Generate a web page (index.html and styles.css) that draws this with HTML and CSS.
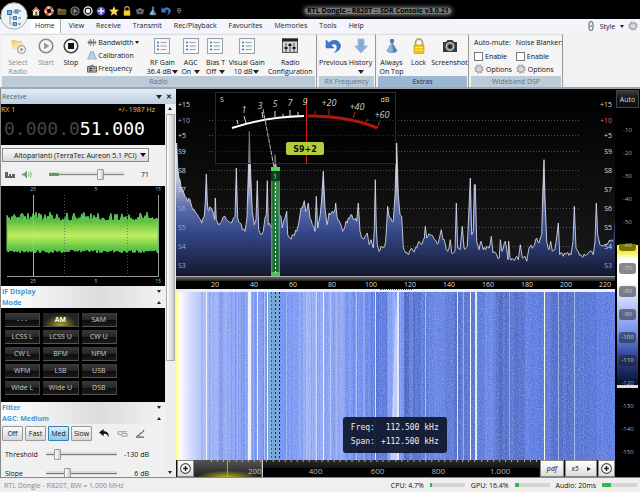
FILE: index.html
```html
<!DOCTYPE html>
<html lang="en">
<head>
<meta charset="utf-8">
<title>SDR Console</title>
<link rel="stylesheet" href="styles.css">
</head>
<body>
<svg class="defs" aria-hidden="true">
  <symbol id="list" viewBox="0 0 16 16"><rect x=".5" y=".5" width="15" height="15" fill="#f4f6f8" stroke="#9a9fa6"/><path d="M3 4.500h2M3 8h2M3 11.500h2" stroke="#4877a8" stroke-width="1.500"/><path d="M6.500 4.500h6M6.500 8h6M6.500 11.500h6" stroke="#97a3b0"/></symbol>
  <symbol id="gear" viewBox="0 0 16 16"><circle cx="8" cy="8" r="5" fill="#e6e6e6" stroke="#a2a4a8" stroke-width="2"/><circle cx="8" cy="8" r="6.500" fill="none" stroke="#a2a4a8" stroke-width="2" stroke-dasharray="2.600 2.500"/><circle cx="8" cy="8" r="2" fill="#fff" stroke="#aaa"/></symbol>
  <symbol id="undo" viewBox="0 0 16 16"><path d="M1 2v8h8L6.300 7.200C9 5 12 6 12 9.500c0 2-1 3.500-2.500 5C13 13.500 15.500 11 15.500 8 15.500 3 9 0 4 4.700z" fill="#3f78c8" stroke="#2c5ea6" stroke-width=".5"/></symbol>
  <symbol id="lock" viewBox="0 0 16 16"><path d="M4.500 8V4.500a3.500 3.500 0 0 1 7 0V8" fill="none" stroke="#b9a46a" stroke-width="1.800"/><rect x="3" y="7" width="10" height="8.500" rx="1" fill="#f2c414" stroke="#b98d10" stroke-width=".6"/><path d="M4 9.500h8M4 12h8" stroke="#ffe470"/></symbol>
  <symbol id="pawn" viewBox="0 0 16 16"><path d="M8 4l5.500 9c-2 2.600-9 2.600-11 0z" fill="#5482b0"/><path d="M8 4l1 10.500c-3 0-5-.5-6.500-1.500z" fill="#8eb2d2"/><circle cx="8" cy="3" r="2.200" fill="#507cab"/></symbol>
  <symbol id="zoomin" viewBox="0 0 16 16"><circle cx="8" cy="8" r="6" fill="#fff" stroke="#444" stroke-width="1.300"/><path d="M8 5v6M5 8h6" stroke="#222" stroke-width="1.800"/></symbol>
</svg>

<header class="titlebar">
  <nav class="quick" aria-label="Quick access">
    <svg viewBox="0 0 16 16"><path d="M1 8l7-7 7 7h-2v7H3V8z" fill="#e9e4d8"/><path d="M8 1l7 7H12L8 4 4 8H1z" fill="#a7553b"/><rect x="7" y="9" width="3" height="6" fill="#77513a"/></svg>
    <svg viewBox="0 0 16 16"><circle cx="8" cy="8" r="5.500" fill="none" stroke="#eee" stroke-width="4"/><circle cx="8" cy="8" r="5.500" fill="none" stroke="#d65a28" stroke-width="4" stroke-dasharray="5.500 3.140"/></svg>
    <svg viewBox="0 0 16 16"><path d="M1 4h5l1 1h7v9H1z" fill="#8a7540"/><path d="M3 7h13l-2 7H1z" fill="#5d5027"/></svg>
    <svg viewBox="0 0 16 16"><circle cx="8" cy="8" r="6.500" fill="#333" stroke="#888" stroke-width="1.500"/><path d="M6 4.500l5 3.500-5 3.500z" fill="#999"/></svg>
    <svg viewBox="0 0 16 16"><circle cx="8" cy="8" r="6.500" fill="#222" stroke="#fff" stroke-width="2"/><rect x="5" y="5" width="6" height="6" fill="#fff"/></svg>
    <svg viewBox="0 0 16 16"><circle cx="8" cy="8" r="7" fill="#5757c9"/><path d="M8 3v10M3 8h10" stroke="#e9e9ff" stroke-width="2.500"/></svg>
    <svg viewBox="0 0 16 16"><path d="M8 0l2.300 5.400 5.700.5-4.300 3.800 1.300 5.800L8 12.500l-5 3 1.300-5.800L0 5.900l5.700-.5z" fill="#ffd35a"/></svg>
    <svg><use href="#lock"/></svg>
    <svg viewBox="0 0 16 16"><path d="M1 5h4l1-2h4l1 2h4l-2 8H3z" fill="#555b60"/><circle cx="8" cy="8.500" r="3" fill="#222" stroke="#a6acb0"/></svg>
    <svg><use href="#pawn"/></svg>
    <svg><use href="#undo"/></svg>
    <svg class="more" viewBox="0 0 8 8"><path d="M1 1h5M1 3h5L3.500 7z" fill="none" stroke="#999"/></svg>
  </nav>
  <h1>RTL Dongle - R820T :: SDR Console v3.0.21</h1>
</header>
<button class="orb" aria-label="Application menu"><svg viewBox="0 0 28 28"><circle cx="14" cy="14" r="13.200" fill="#eef1f5" stroke="#9eb0c0"/><path d="M10 12v10h5M10 16h4M10 10h7" fill="none" stroke="#8fa3b5"/><g fill="#83b2d8" stroke="#4078ab"><rect x="7.500" y="8.500" width="4" height="4"/><rect x="15" y="8" width="3" height="3"/><rect x="13.500" y="14.500" width="3" height="3"/><rect x="13.500" y="20.500" width="3" height="3"/></g><path d="M18 16h3M18 22h3M19 9h2" stroke="#557"/></svg></button>

<nav class="tabs">
  <a class="active" href="#home">Home</a><a href="#view">View</a><a href="#receive">Receive</a><a href="#transmit">Transmit</a><a href="#rec">Rec/Playback</a><a href="#fav">Favourites</a><a href="#mem">Memories</a><a href="#tools">Tools</a><a href="#help">Help</a>
  <div class="style-menu"><svg viewBox="0 0 8 10"><path d="M2 4V2.500a2 2 0 0 1 4 0V4M2 6v1.500a2 2 0 0 0 4 0V6M1 5h6" fill="none" stroke="#555"/></svg><button>Style <i class="caret"></i></button><svg><use href="#gear"/></svg></div>
</nav>

<section class="ribbon">
  <div class="group radio">
    <div class="tools">
      <button class="tool w-l off"><svg viewBox="0 0 16 16"><path d="M1 2h5l1 1h5v8H3z" fill="#e9d37a"/><path d="M4 5h10l-2 6H3z" fill="#f3e5a6"/><circle cx="11.500" cy="11.500" r="4" fill="#f5f5f5" stroke="#8b8b8b"/><path d="M10.500 9.500l3 2-3 2z" fill="#888"/></svg><span>Select<br>Radio</span></button>
      <button class="tool w-s off"><svg viewBox="0 0 16 16"><circle cx="8" cy="8" r="6.800" fill="#f6f6f6" stroke="#8a8a8a" stroke-width="1.600"/><path d="M6 4.500l5.500 3.500L6 11.500z" fill="#999"/></svg><span>Start</span></button>
      <button class="tool w-s"><svg viewBox="0 0 16 16"><circle cx="8" cy="8" r="6.800" fill="#f6f6f6" stroke="#444" stroke-width="1.600"/><rect x="5" y="5" width="6" height="6" fill="#111"/></svg><span>Stop</span></button>
      <div class="stack">
        <button><svg viewBox="0 0 10 10"><path d="M0 5h10M1.500 3v4M3 1v8M4.500 3v4M6.500 1v8M8.500 3v4" stroke="#666"/></svg>Bandwidth <i class="caret"></i></button>
        <button><svg viewBox="0 0 10 10"><path d="M4 0v9H0zM6 0v9h4z" fill="#bdd9ee" stroke="#6d9cc0" stroke-width=".7"/></svg>Calibration</button>
        <button><svg viewBox="0 0 10 10"><path d="M1 3l6-2M0 3h10v6H0z" fill="#aaa" stroke="#555"/><path d="M2 5h3M2 7h3M7 5h1" stroke="#222"/></svg>Frequency</button>
      </div>
      <button class="tool w-l"><svg><use href="#list"/></svg><span>RF Gain<br>36.4 dB<i class="caret"></i></span></button>
      <button class="tool w-s"><svg><use href="#list"/></svg><span>AGC<br>On <i class="caret"></i></span></button>
      <button class="tool w-s"><svg><use href="#list"/></svg><span>Bias T<br>Off <i class="caret"></i></span></button>
      <button class="tool w-m"><svg><use href="#list"/></svg><span>Visual Gain<br>10 dB<i class="caret"></i></span></button>
      <button class="tool w-xl"><svg viewBox="0 0 16 16"><rect x=".5" y="1" width="15" height="13.500" fill="#d6d6d6" stroke="#555"/><path d="M0 2h16" stroke="#222" stroke-width="3"/><path d="M4 5v9M8 5v9M12 5v9" stroke="#444"/><path d="M2.500 10h3M6.500 7h3M10.500 10h3" stroke="#111" stroke-width="2"/></svg><span>Radio<br>Configuration</span></button>
    </div>
    <h2>Radio</h2>
  </div>
  <div class="group rx">
    <div class="tools">
      <button class="tool w-s"><svg><use href="#undo"/></svg><span>Previous</span></button>
      <button class="tool w-s"><svg viewBox="0 0 16 16"><path d="M5 1h6v7h3.500L8 15 1.500 8H5z" fill="#86abd8" stroke="#a9bfd9"/></svg><span>History<br><i class="caret"></i></span></button>
    </div>
    <h2>RX Frequency</h2>
  </div>
  <div class="group extras">
    <div class="tools">
      <button class="tool w-s"><svg><use href="#pawn"/></svg><span>Always<br>On Top</span></button>
      <button class="tool w-s"><svg><use href="#lock"/></svg><span>Lock</span></button>
      <button class="tool w-m"><svg viewBox="0 0 16 16"><path d="M1 4h3l1.500-2h5L12 4h3v10H1z" fill="#363a3d"/><circle cx="8" cy="8.500" r="4" fill="#777" stroke="#ddd"/><circle cx="8" cy="8.500" r="2" fill="#222"/></svg><span>Screenshot</span></button>
    </div>
    <h2>Extras</h2>
  </div>
  <div class="group wide">
    <div class="tools options">
      <div><b>Auto-mute:</b><label><input type="checkbox">Enable</label><button><svg><use href="#gear"/></svg>Options</button></div>
      <div><b>Noise Blanker:</b><label><input type="checkbox">Enable</label><button><svg><use href="#gear"/></svg>Options</button></div>
    </div>
    <h2>Wideband DSP</h2>
  </div>
</section>

<main>
  <aside>
    <div class="dock"><span>Receive</span><i class="caret"></i><button aria-label="Close">✕</button></div>
    <div class="dock-body">
      <div class="scroll">
        <div class="vfo"><p><span>RX 1</span><span>+/- 1987 Hz</span></p><div class="freq"><span>0.000.0</span>51.000</div></div>
        <div class="audio">
          <select aria-label="Output device"><option>Altoparlanti (TerraTec Aureon 5.1 PCI)</option></select>
          <div class="volume"><svg viewBox="0 0 10 8"><path d="M0 6.500h10M0 4.500h3M4 4.500h2M0 2.500h3M7 4.500h3" stroke="#333" stroke-width="1.300"/></svg><svg viewBox="0 0 10 8"><path d="M0 3h2l3-3v8L2 5H0z" fill="#888"/><path d="M6.500 2q1.500 2 0 4M8.300 1q2 3 0 6" fill="none" stroke="#58c850"/></svg><input type="range" class="vol" value="71" aria-label="Volume"><output>71</output></div>
        </div>
        <svg class="scope" viewBox="0 0 164 100" preserveAspectRatio="none">
          <defs><linearGradient id="wave" x1="0" y1="30" x2="0" y2="66" gradientUnits="userSpaceOnUse"><stop offset="0" stop-color="#3fae35"/><stop offset=".55" stop-color="#c0f060"/><stop offset="1" stop-color="#43b83a"/></linearGradient></defs>
          <path d="M32.500 9v82M157.500 9v82M6 90.500h152" stroke="#999" fill="none"/>
          <path id="wave-shape" fill="url(#wave)" stroke="#62cf62" stroke-width="1"/>
          <path d="M32.500 9v82" stroke="#ccc" opacity=".4"/><path d="M63.500 9v82M126.500 9v82" stroke="#666" stroke-dasharray="1 2" opacity=".8"/>
          <g class="tiny"><text x="32" y="5">25</text><text x="95" y="5">5</text><text x="157" y="5">15</text><text x="32" y="97">25</text><text x="95" y="97">5</text><text x="157" y="97">15</text></g>
        </svg>
        <h3>IF Display <i class="caret"></i></h3>
        <h3>Mode <i class="caret up"></i></h3>
        <div class="modes"><button>- - -</button><button class="on">AM</button><button>SAM</button><button>LCSS L</button><button>LCSS U</button><button>CW U</button><button>CW L</button><button>BFM</button><button>NFM</button><button>WFM</button><button>LSB</button><button>USB</button><button>Wide L</button><button>Wide U</button><button>DSB</button></div>
        <h3>Filter <i class="caret"></i></h3>
        <h3>AGC: Medium <i class="caret up"></i></h3>
        <div class="agc"><button>Off</button><button>Fast</button><button class="on">Med</button><button>Slow</button>
          <svg viewBox="0 0 12 10"><path d="M5 0L0 4l5 4V5.500c3-.5 5 1 5 4 2-4-1-7-5-7z" fill="#111"/></svg>
          <svg viewBox="0 0 12 10"><path d="M1 3h5v2h5v3H5V6H1zM6 3h5" fill="#eee" stroke="#999"/></svg>
          <svg viewBox="0 0 12 10"><path d="M1 9h9M2 8q4-1 4-4M7 5l3-4" fill="none" stroke="#222"/></svg></div>
        <div class="row"><label for="thr">Threshold</label><input id="thr" type="range" value="12"><output>-130 dB</output></div>
        <div class="row"><label for="slope">Slope</label><input id="slope" type="range" value="28"><output>6 dB</output></div>
      </div>
      <div class="bar"><i class="caret up"></i><span></span><i class="caret"></i></div>
    </div>
  </aside>

  <section class="display">
    <svg class="spectrum" viewBox="0 0 439 200" preserveAspectRatio="none">
      <defs>
        <linearGradient id="sky" x1="0" y1="0" x2="0" y2="1"><stop offset="0" stop-color="#000"/><stop offset="1" stop-color="#1b1b1b"/></linearGradient>
        <linearGradient id="trace" x1="0" y1="50" x2="0" y2="187" gradientUnits="userSpaceOnUse"><stop offset="0" stop-color="#fff"/><stop offset=".3" stop-color="#bcc2d8"/><stop offset=".5" stop-color="#5c6da8"/><stop offset=".68" stop-color="#34488a"/><stop offset="1" stop-color="#15172c"/></linearGradient>
        <linearGradient id="axis" x1="0" y1="0" x2="0" y2="1"><stop offset="0" stop-color="#777"/><stop offset="1" stop-color="#222"/></linearGradient>
        <linearGradient id="band"><stop offset="0" stop-color="#5ed26c"/><stop offset=".25" stop-color="#1d7a2e"/><stop offset=".75" stop-color="#1d7a2e"/><stop offset="1" stop-color="#5ed26c"/></linearGradient>
      </defs>
      <rect width="439" height="188" fill="url(#sky)"/>
      <g id="grid" stroke="#555" stroke-dasharray="1 2"></g>
      <path id="trace-fill" fill="url(#trace)"/>
      <path id="trace-line" fill="none" stroke="#d9dcea" stroke-width="1" stroke-opacity=".85"/>
      <rect x="39.500" y="3.500" width="180" height="71" fill="#000" fill-opacity=".45" stroke="#2b2b2b"/>
      <path d="M56 39Q89 28 128 27" fill="none" stroke="#fff" stroke-width="2"/>
      <path d="M62 35l-1-4M70 34l-2-7M87 29l-1-6M99 28v-6M107 28v-3M114 27v-6M122 27v-4" stroke="#ddd"/>
      <path d="M132 27Q173 27 201 39" fill="none" stroke="#b0160e" stroke-width="3"/>
      <path d="M139 26v-4M153 26v-6M177 29l2-6M190 34l2-4M201 39l3-7" stroke="#c02018"/>
      <path d="M87 20l11 58" stroke="#bbb" stroke-dasharray="5 1"/>
      <path d="M130.500 9v66" stroke="#d01812"/>
      <g class="dial"><text x="68" y="24">1</text><text x="84" y="20">3</text><text x="99" y="18">5</text><text x="114" y="17">7</text><text x="129" y="16">9</text><text x="153" y="17">+20</text><text x="181" y="21">+40</text><text x="206" y="29">+60</text></g>
      <g class="scale"><text x="46" y="13" text-anchor="middle">S</text><text x="209" y="13" text-anchor="middle">dB</text></g>
      <rect x="110" y="53" width="38" height="13" rx="2" fill="#b4cc3c"/><text class="level" x="129" y="63">S9+2</text>
      <rect x="95" y="78" width="9" height="109" fill="url(#band)" opacity=".8"/><rect x="95" y="78" width="9" height="4" fill="#55d25c"/><rect x="95" y="82" width="9" height="10" fill="#07420f"/><rect x="95" y="183" width="9" height="4" fill="#48c552"/>
      <path d="M99.500 94v92" stroke="#e5ffe5" stroke-dasharray="2 2"/><text class="scale mid" x="99" y="90">1</text>
      <rect y="187" width="439" height="13" fill="#000"/><rect y="187" width="439" height="5" fill="url(#axis)"/><path d="M0 187.500h439" stroke="#aaa"/>
      <g id="labels" class="scale"></g>
    </svg>
    <div class="grip"></div>
    <div class="fall">
      <svg viewBox="0 0 439 168" preserveAspectRatio="none">
        <defs>
          <linearGradient id="base" x1="0" x2="439" y1="0" y2="0" gradientUnits="userSpaceOnUse"></linearGradient>
          <filter id="noise" x="0" y="0" width="1" height="1"><feTurbulence type="fractalNoise" baseFrequency=".8" numOctaves="2" seed="4"/><feColorMatrix values="0 0 0 0 .85  0 0 0 0 .9  0 0 0 0 1  1.800 0 0 0 -.68"/></filter>
        </defs>
        <rect width="439" height="168" fill="url(#base)"/>
        <g id="stripes"></g>
        <rect width="439" height="168" filter="url(#noise)" opacity=".35"/>
        <g id="lines"></g>
        <path d="M220 0l3 100v68h-9l3-68z" fill="#e8edff" opacity=".55"/>
        <path d="M99.500 0v168M103.500 0v168" stroke="#103040" stroke-dasharray="2 2"/><path d="M95.500 0v168" stroke="#345f80" stroke-dasharray="2 2"/>
      </svg>
      <dl class="tip"><dt>Freq:</dt><dd>112.500 kHz</dd><dt>Span:</dt><dd>+112.500 kHz</dd></dl>
    </div>
    <div class="range">
      <button class="zin" aria-label="Zoom in"><svg><use href="#zoomin"/></svg></button>
      <svg class="ruler" viewBox="0 0 346 17" preserveAspectRatio="none">
        <defs><linearGradient id="sel" x1="0" y1="0" x2="0" y2="1"><stop offset="0" stop-color="#555"/><stop offset="1" stop-color="#222"/></linearGradient><radialGradient id="glow" cx=".5" cy="1" r=".5"><stop offset="0" stop-color="#b8b414"/><stop offset="1" stop-color="#b8b414" stop-opacity="0"/></radialGradient><linearGradient id="night" x1="0" y1="0" x2="0" y2="1"><stop offset="0" stop-color="#2c2c2c"/><stop offset=".45" stop-color="#141414"/><stop offset=".5" stop-color="#000"/></linearGradient></defs>
        <rect width="346" height="17" fill="url(#night)"/><rect width="68" height="17" fill="url(#sel)"/><rect x="2" y="4" width="62" height="13" fill="url(#glow)"/>
        <path d="M33.500 0v17" stroke="#b5b020"/><path d="M68.500 0v17" stroke="#fff"/>
        <g id="ticks" stroke="#aaa"></g>
        <g class="ruler-text"><text x="61" y="14">200</text><text x="122" y="14">400</text><text x="184" y="14">600</text><text x="245" y="14">800</text><text x="307" y="14">1.000</text></g>
      </svg>
      <button class="r1">pdf</button><button class="r2">x5 <i class="caret right"></i></button><button class="r3" aria-label="Zoom"><svg><use href="#zoomin"/></svg></button>
    </div>
  </section>

  <section class="levels">
    <button>Auto</button>
    <ol><li>-10</li><li>-20</li><li>-30</li><li>-40</li><li>-50</li><li class="y">-60</li><li class="g">-70</li><li class="g">-80</li><li class="g">-90</li><li class="g">-100</li><li class="g">-110</li><li>-120</li><li>-130</li><li>-140</li><li>-150</li></ol>
  </section>
</main>

<footer><span class="device">RTL Dongle - R820T, BW = 1.000 MHz</span><span>CPU: 4.7%</span><meter min="0" max="100" value="5">5%</meter><span>GPU: 16.4%</span><meter min="0" max="100" value="12">16%</meter><span>Audio: 20ms</span><meter min="0" max="100" value="25">20</meter></footer>
<script src="plot.js"></script>
</body>
</html>
```
FILE: styles.css
```css
* { box-sizing: border-box; }
body { margin: 0; height: 100vh; display: flex; flex-direction: column; overflow: hidden; background: #f0eff1; color: #111; font: 7px/9px "Open Sans", "Noto Sans", sans-serif; }
button { font: inherit; color: inherit; background: none; border: 0; padding: 0; }
h1, h2, h3, p, ol, dl, dd { margin: 0; padding: 0; font: inherit; }
.defs { position: absolute; width: 0; height: 0; }
.caret { display: inline-block; border: 3px solid transparent; border-top: 4px solid #222; border-bottom: 0; }
.caret.up { border-top: 0; border-bottom: 3px solid #222; }
.caret.right { border: 2px solid transparent; border-left: 4px solid #222; border-right: 0; }

.titlebar { flex: none; height: 19px; background: #000; display: flex; align-items: center; padding: 3px 0 0 31px; position: relative; }
.quick { display: flex; gap: 3px; align-items: center; }
.quick svg { width: 10px; height: 10px; }
.quick .more { width: 7px; height: 6px; margin-left: 2px; }
.titlebar h1 { margin-left: 122px; padding: 0 2px; color: #000; font-size: 7px; font-weight: 700; background: #777; border-radius: 5px; box-shadow: 0 0 4px 1px #777; line-height: 6px; white-space: nowrap; }
.orb { position: absolute; left: 0; top: 2px; width: 28px; height: 28px; z-index: 3; }
.orb svg { display: block; width: 28px; height: 28px; }
.tabs { flex: none; height: 14px; display: flex; background: #f3f4fc; padding-left: 30px; }
.tabs a { color: #222; text-decoration: none; padding: 2px 0; margin-right: 12px; white-space: nowrap; }
.tabs .active { background: #fff; border-right: 1px solid #aaa; padding: 2px 5px; margin-right: 8px; }
.style-menu { margin-left: auto; display: flex; gap: 4px; align-items: center; padding-right: 2px; }
.style-menu svg { width: 10px; height: 10px; }
.style-menu .caret { border-width: 3px 2px 0; margin-left: 3px; vertical-align: 1px; }

.ribbon { flex: none; height: 56px; display: flex; background: #f1f1f2; border-bottom: 2px solid #9ba8b3; padding: 1px 0 0 2px; }
.group { border-right: 1px solid #999; padding-right: 1px; margin-right: 2px; display: flex; flex-direction: column; background: #f5f5f6; border-top: 1px solid #ddd; }
.radio { width: 315px; }
.rx { width: 57px; }
.extras { width: 91px; }
.wide { width: 92px; }
.tools { display: flex; flex: 1; min-height: 0; padding-top: 1px; }
.group h2 { height: 11px; flex: none; line-height: 11px; text-align: center; background: #bccbd8; color: #5f7486; }
.extras h2 { background: #9db6d3; color: #1d2d44; }
.tool { display: flex; flex-direction: column; align-items: center; justify-content: flex-start; gap: 4px; line-height: 9px; white-space: nowrap; }
.tool svg { width: 16px; height: 16px; flex: none; margin-top: 2px; }
.tool .caret { margin-left: 1px; }
.off { color: #888; }
.w-s { width: 25px; } .w-m { width: 38px; } .w-l { width: 32px; } .w-xl { width: 50px; }
.stack { width: 64px; padding-left: 4px; display: flex; flex-direction: column; gap: 1px; }
.stack button { display: flex; align-items: center; gap: 1px; height: 12px; }
.stack svg { width: 10px; height: 9px; }
.stack .caret { border-width: 3px 2px 0; margin-left: 1px; }
.rx .tool { width: 28px; }
.extras .tool { width: 27px; }
.extras .w-m { width: 35px; }
.options { gap: 4px; padding: 2px 2px 0 3px; }
.options > div { display: flex; flex-direction: column; white-space: nowrap; gap: 1px; }
.options b { font-weight: 400; line-height: 12px; }
.options label, .options button { display: flex; align-items: center; gap: 2px; height: 12px; }
.options svg { width: 10px; height: 10px; }
input[type=checkbox] { appearance: none; width: 9px; height: 9px; margin: 0; background: #fff; border: 1px solid #777; }

main { flex: 1; min-height: 0; display: flex; background: #000; }
aside { width: 176px; flex: none; display: flex; flex-direction: column; background: #e8ebef; border-left: 1px solid #888; overflow: hidden; }
.dock { height: 15px; flex: none; display: flex; align-items: center; padding: 0 4px 0 1px; color: #4b5f73; background: linear-gradient(#e3ecf5, #bdcfe0); }
.dock span { flex: 1; }
.dock button { margin-left: 4px; color: #222; font-weight: 700; }
.dock-body { flex: 1; min-height: 0; display: flex; }
.scroll { flex: 1; min-width: 0; overflow: hidden; background: #f0f0f1; }
.vfo { background: #000; height: 41px; }
.vfo p { display: flex; justify-content: space-between; padding: 1px 10px 0 0; color: #e8c060; }
.freq { padding-left: 3px; font: 18px/29px "DejaVu Sans Mono", monospace; color: #fff; white-space: nowrap; }
.freq span { color: #444; }
.audio { height: 41px; padding: 3px 16px 0 1px; position: relative; }
select { appearance: none; display: block; width: 100%; height: 14px; font: inherit; color: #111; border: 1px solid #888; padding: 0 0 0 11px; margin: 0; background: linear-gradient(#fafafa, #d8d8d8); }
.audio::after { content: ""; position: absolute; right: 19px; top: 8px; border: 3px solid transparent; border-top: 4px solid #111; border-bottom: 0; pointer-events: none; }
.volume { display: flex; align-items: center; gap: 7px; padding-left: 3px; height: 24px; }
.volume svg { width: 10px; height: 9px; }
.volume input { flex: 1; min-width: 0; margin-left: 10px; }
.volume output { width: 16px; text-align: right; }
input[type=range] { appearance: none; background: linear-gradient(#777, #777) center / 100% 1px no-repeat, linear-gradient(#ddd, #ddd) center / 100% 4px no-repeat; height: 11px; margin-top: 0; margin-bottom: 0; }
input[type=range]::-webkit-slider-thumb { appearance: none; width: 7px; height: 11px; background: linear-gradient(90deg, #fff, #ccc); border: 1px solid #999; border-radius: 1px; }
input.vol { background: linear-gradient(#55a355, #55a355) left center / 13% 3px no-repeat, linear-gradient(#888, #888) center / 100% 1px no-repeat, linear-gradient(#ddd, #ddd) center / 100% 4px no-repeat; }
.scope { display: block; width: 100%; height: 100px; background: #000; }
.tiny { font-size: 5px; fill: #bbb; text-anchor: middle; }
h3 { height: 11px; line-height: 11px; font-weight: 700; color: #4b96d4; padding: 0 4px 0 1px; display: flex; justify-content: space-between; align-items: center; background: linear-gradient(90deg, #fff, #dcdcdc 60%, #f2f2f2); }
h3 .caret { border-width: 3px 2px 0; }
h3 .caret.up { border-width: 0 2px 3px; }
.modes { background: #000; height: 94px; padding: 5px 48px 0 4px; display: grid; grid-template-columns: repeat(3, 1fr); grid-auto-rows: 14px; gap: 3px; }
.modes button { color: #ccc; background: linear-gradient(#3a3a3a, #272727 50%, #0c0c0c 52%, #1a1a1a); border-bottom: 1px solid #555; border-right: 1px solid #444; }
.modes .on { color: #fff; font-weight: 700; background: radial-gradient(ellipse at 50% 100%, #b3a813, transparent 65%), #222; }
.agc { display: flex; gap: 2px; padding: 2px 0 3px 1px; align-items: center; }
.agc button { width: 21px; height: 15px; border: 1px solid #999; border-radius: 1px; background: linear-gradient(#fafafa, #d6d6d6); }
.agc .on { background: linear-gradient(#d5effb, #8bc7e6); border-color: #3c7fb1; }
.agc svg { width: 11px; height: 9px; margin-left: 5px; }
.row { display: flex; align-items: center; height: 18px; padding: 0 16px 0 4px; }
.agc + .row { height: 20px; }
.row label { width: 41px; }
.row input { flex: 1; min-width: 0; margin: 0; }
.row output { width: 32px; text-align: right; }
.bar { width: 10px; margin-right: 1px; background: #eee; display: flex; flex-direction: column; align-items: center; padding: 3px 0; }
.bar span { width: 9px; height: 247px; margin: 4px 0 auto; border: 1px solid #aaa; background: linear-gradient(90deg, #fff, #c8c8cc); }
.bar .caret { border-width: 3px 2px 0; }
.bar .caret.up { border-width: 0 2px 3px; }

.display { flex: 1; min-width: 0; display: flex; flex-direction: column; }
.spectrum { display: block; width: 100%; height: 200px; flex: none; }
.scale { font-size: 7px; fill: #ddd; }
.mid, .scale .mid { text-anchor: middle; }
.scale .end { text-anchor: end; }
.scale .cool { fill: #98a3da; }
.scale .hot { fill: #d75a78; }
.dial { font-size: 9px; font-style: italic; fill: #ccc; text-anchor: middle; }
.level { font: 700 8px "DejaVu Sans", sans-serif; text-anchor: middle; fill: #111; }
.grip { height: 3px; flex: none; background: #e9edf8; }
.grip::after { content: ""; display: block; width: 32px; margin: 0 auto; border-top: 1px dotted #555; }
.fall { flex: 1; min-height: 0; position: relative; }
.fall > svg { display: block; width: 100%; height: 100%; }
.tip { position: absolute; left: 38%; bottom: 7px; display: grid; grid-template-columns: auto auto; column-gap: 6px; padding: 4px 8px; background: #10182cee; color: #eee; border-radius: 3px; font: 8px/14px "DejaVu Sans Mono", monospace; }
.tip dd { text-align: right; }
.range { height: 17px; flex: none; display: flex; background: #111; }
.range button { background: linear-gradient(#fff, #dcdcdc); border: 1px solid #888; display: flex; align-items: center; justify-content: center; gap: 8px; font-style: italic; margin-left: 1px; }
.range .zin { width: 17px; }
.range button svg { width: 13px; height: 13px; }
.r1 { width: 24px; } .r2 { width: 32px; } .r3 { width: 17px; }
.ruler { flex: 1; min-width: 0; height: 17px; }
.ruler-text { font-size: 8px; fill: #bbb; text-anchor: middle; }

.levels { width: 25px; flex: none; background: #000; display: flex; flex-direction: column; padding: 1px 1px 0; }
.levels button { height: 18px; color: #ddd; border: 1px solid #444; background: linear-gradient(#3a3a3a, #111 55%); }
.levels ol { flex: 1; margin: 0 1px; padding-top: 11px; list-style: none; color: #aaa; font-size: 6px; background: linear-gradient(#000 37%, #ffff3c 37%, #f5f040 39%, #fff 41%, #fff 47%, #b8c5fa 54%, #7290ee 61%, #31489c 67%, #08102c 75%, #ddd 75%, #ddd 76%, #000 76%); }
.levels li { height: 11px; line-height: 11px; margin: 6px 2px 12px; text-align: center; border-radius: 3px; }
.levels .g { background: #2228; color: #ccc; }
.levels .y { background: linear-gradient(transparent 40%, #777400 40%); color: #ddd; }

footer { height: 15px; flex: none; display: flex; align-items: center; gap: 6px; padding: 0 3px 0 4px; border-top: 1px solid #888; background: #f0eeee; white-space: nowrap; }
.device { margin-right: auto; color: #888; }
meter { width: 35px; height: 4px; margin-right: 0; }
meter::-webkit-meter-bar { border: 0; border-radius: 0; background: #d5d5d5; height: 4px; }
meter::-webkit-meter-optimum-value { background: #2cba48; }
```
FILE: plot.js
```js
const NS = 'http://www.w3.org/2000/svg';
const $ = id => document.getElementById(id);
function add(parentId, tag, attrs, text) {
  const el = document.createElementNS(NS, tag);
  for (const k in attrs) el.setAttribute(k, attrs[k]);
  if (text !== undefined) el.textContent = text;
  $(parentId).appendChild(el);
}
let seed = 11;
const rnd = () => (seed = (seed * 16807) % 2147483647) / 2147483647;

// Signal samples, three units per pixel: position, level
const samples = [5,165,8,240,12,270,18,295,25,310,30,325,38,340,45,335,50,355,60,370,70,385,80,405,88,385,91,340,94,258,97,340,99,365,108,360,115,375,119,395,121,330,124,395,133,410,140,400,150,385,160,400,170,405,180,385,184,240,188,390,195,405,202,425,210,430,216,390,220,250,223,130,227,260,232,370,238,410,243,395,247,278,251,425,258,440,265,430,270,390,274,380,277,278,280,410,290,420,298,400,300,200,305,260,312,380,318,385,322,420,330,390,335,370,338,440,345,450,355,440,365,430,372,400,378,360,385,350,388,338,392,370,400,345,405,390,412,410,420,430,424,325,428,420,436,380,440,330,445,250,450,360,456,410,462,375,472,370,480,365,482,345,486,385,495,405,503,430,510,415,520,390,530,380,538,395,545,400,550,345,555,430,560,450,570,445,577,435,583,470,588,455,595,480,598,420,601,275,604,420,607,470,612,490,618,475,625,480,632,460,638,355,645,390,655,400,660,320,665,165,670,320,675,380,680,385,685,480,692,495,700,500,705,487,715,490,725,480,732,460,740,470,748,450,751,415,755,450,765,440,780,455,790,465,799,425,804,455,810,465,818,490,826,455,830,495,840,490,844,345,848,480,855,485,862,415,867,480,877,475,881,380,886,270,890,440,895,430,898,290,901,290,905,460,912,485,918,460,925,485,935,475,942,480,949,445,954,495,965,500,973,510,976,455,981,490,991,460,995,485,999,515,1001,460,1005,510,1015,515,1025,505,1030,515,1036,470,1042,510,1050,505,1055,520,1062,480,1075,475,1085,450,1092,465,1100,440,1103,320,1107,215,1110,330,1115,460,1122,485,1127,460,1132,490,1140,485,1146,440,1150,405,1154,500,1165,505,1175,495,1188,500,1194,460,1198,355,1203,480,1210,490,1220,505,1235,500,1250,490,1255,500,1260,460,1264,345,1268,440,1275,470,1285,475,1300,465,1310,455,1315,460,1319,390];
const pts = [];
for (let i = 0; i < samples.length - 2; i += 2) {
  const [x0, y0, x1, y1] = samples.slice(i, i + 4);
  const n = Math.max(1, Math.round((x1 - x0) / 3.5));
  for (let k = 0; k < n; k++) {
    const j = k && Math.abs(y1 - y0) < 40 ? (rnd() - .5) * 15 : 0;
    pts.push([(x0 + (x1 - x0) * k / n) / 3 - 1, (y0 + (y1 - y0) * k / n + j) / 3 - 1]);
  }
}
const line = 'M' + pts.map(p => p[0].toFixed(1) + ' ' + p[1].toFixed(1)).join('L');
$('trace-line').setAttribute('d', line);
$('trace-fill').setAttribute('d', line + 'L439 130V187H0V54z');

[['+15', 15], ['+10', 31], ['+5', 46], ['S9', 62], ['S8', 81], ['S7', 100], ['S6', 119], ['S5', 138], ['S4', 157], ['S3', 176]].forEach(([t, y], i) => {
  if (i) add('grid', 'path', { d: `M33 ${y}.5H404` });
  add('labels', 'text', { x: 2, y: y + 3, class: i === 1 || i > 5 ? 'cool' : '' }, t);
  add('labels', 'text', { x: 436, y: y + 3, class: 'end' + (i === 1 ? ' hot' : i > 8 ? ' cool' : '') }, t);
});
for (let f = 20; f <= 220; f += 20) add('labels', 'text', { x: f * 1.95, y: 198, class: 'mid' }, f);

// Waterfall colour bands across the width
[[0, '#ffffa0'], [3, '#ffffe0'], [6, '#f4f6ff'], [16, '#ccd5fb'], [32, '#9fb2f6'], [50, '#8da4f3'], [70, '#829cf3'], [90, '#6f8eee'], [110, '#6d8df0'], [122, '#7a98f2'], [135, '#9cb0f8'], [150, '#86a0f5'], [162, '#a0b3f8'], [170, '#6f8ff0'], [190, '#7492f0'], [200, '#4f6fd6'], [211, '#5676da'], [213, '#86a2fa'], [226, '#7e9bf8'], [229, '#4563c4'], [245, '#5271d2'], [262, '#6785e6'], [280, '#4d6bca'], [300, '#5674d4'], [317, '#6684e6'], [322, '#4a66c0'], [345, '#4f6dcc'], [352, '#5a7ae0'], [372, '#5977dd'], [380, '#4a67c3'], [400, '#4f6dcc'], [439, '#5c7ce6']]
  .forEach(([x, c]) => add('base', 'stop', { offset: x / 439, 'stop-color': c }));
for (let x = 25; x < 439; x += 2) add('stripes', 'rect', { x, y: 0, width: 1 + Math.round(rnd()), height: 168, fill: rnd() > .5 ? '#bccbff' : '#3454c0', opacity: (rnd() * (x < 240 ? .25 : .13)).toFixed(2) });
add('lines', 'rect', { x: 91, y: 0, width: 13, height: 168, fill: '#79b6c8', opacity: .6 });
[[0, 2, '#ffff80', .9], [30, 1, '#fff', .8], [72, 3, '#fff', .85], [81, 1, '#fff', .85], [91, 1, '#fff', .9], [88, 1, '#dfe6ff', .6], [61, 1, '#dfe6ff', .3], [110, 1, '#dfe6ff', .4], [140, 1, '#fff', .5], [147, 1, '#fff', .8], [130, 1, '#fff', .3], [154, 1, '#fff', .3], [180, 1, '#fff', .3], [199, 1, '#fff', .8], [221, 2, '#fff', .75], [249, 1, '#cdd9ff', .6], [281, 1, '#fff', .8], [287, 1, '#cdd9ff', .5], [294, 1, '#fff', .95], [299, 2, '#e8fff8', .85], [333, 1, '#cdd9ff', .55], [368, 1, '#faffd8', 1], [382, 1, '#cdd9ff', .6], [398, 1, '#cdd9ff', .65]]
  .forEach(([x, w, fill, opacity]) => add('lines', 'rect', { x, y: 0, width: w, height: 168, fill, opacity }));

for (let x = 17; x < 346; x += 6.15) add('ticks', 'path', { d: `M${Math.round(x)}.5 0v2` });

// Audio envelope
let upper = 'M6 36', lower = '';
for (let x = 6; x <= 157; x += 1) {
  upper += `L${x} ${(35 - Math.pow(rnd(), 2) * 9).toFixed(1)}`;
  lower = `L${x} ${(63 + rnd() * 4).toFixed(1)}` + lower;
}
$('wave-shape').setAttribute('d', upper + lower + 'z');
```
